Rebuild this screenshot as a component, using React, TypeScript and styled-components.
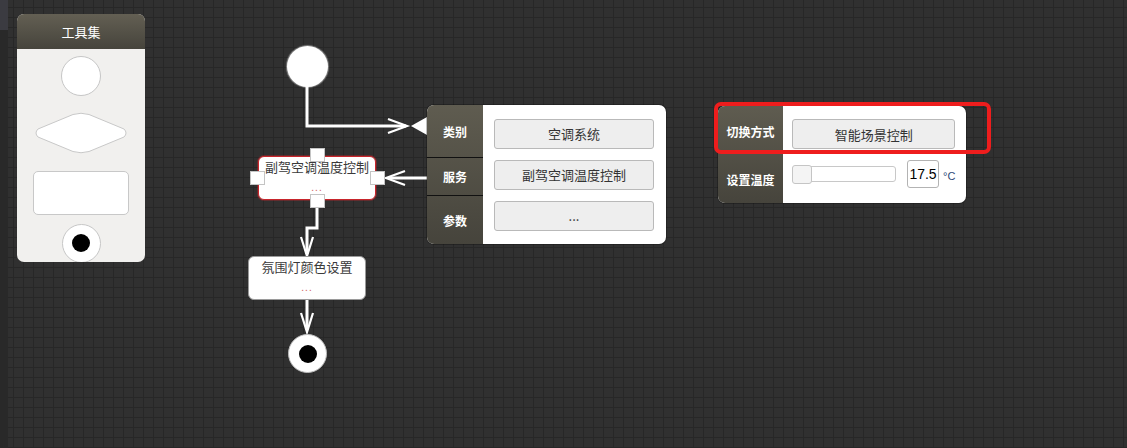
import React from "react";
import styled, { createGlobalStyle, css } from "styled-components";

const Global = createGlobalStyle`
  html, body { margin: 0; padding: 0; background: #303030; }
  body { font-family: "Noto Sans CJK SC", "Noto Sans", sans-serif; }
  * { box-sizing: border-box; }
`;

const Page = styled.div`
  display: flex;
  width: 1127px;
  height: 448px;
  overflow: hidden;
`;

const SideStrip = styled.div`
  width: 8px;
  flex: none;
  background: #292929;
  display: flex;
  flex-direction: column;
`;

const SideTab = styled.div`
  height: 30px;
  background: #3b3b41;
`;

const Canvas = styled.div`
  position: relative;
  flex: 1;
  background-color: #303030;
  background-image: linear-gradient(#272727 1px, transparent 1px),
    linear-gradient(90deg, #272727 1px, transparent 1px);
  background-size: 10px 10px;
  background-position: -5px 7px, 5px 0;
`;

const Layer = styled.svg`
  position: absolute;
  left: -8px;
  top: 0;
  width: 1127px;
  height: 448px;
  pointer-events: none;
`;

/* ---------- toolbox ---------- */
const Toolbox = styled.div`
  position: absolute;
  left: 9px;
  top: 14px;
  width: 128px;
  height: 248px;
  border-radius: 7px;
  overflow: hidden;
  background: #f1f0ee;
  display: flex;
  flex-direction: column;
`;

const ToolboxHead = styled.div`
  height: 35px;
  flex: none;
  background: linear-gradient(#635f53, #46443c);
  color: #fff;
  font-size: 13px;
  display: flex;
  align-items: center;
  justify-content: center;
`;

const ToolList = styled.div`
  display: flex;
  flex-direction: column;
  align-items: center;
  padding-top: 6px;
`;

const ToolSlot = styled.div<{ $h: number }>`
  height: ${(p) => p.$h}px;
  display: flex;
  align-items: center;
  justify-content: center;
`;

const ToolCircle = styled.div`
  width: 40px;
  height: 40px;
  border-radius: 50%;
  background: #fff;
  border: 1px solid #c6c6c6;
`;

const ToolRect = styled.div`
  width: 96px;
  height: 44px;
  border-radius: 5px;
  background: #fff;
  border: 1px solid #c8c8c8;
`;

const ToolEnd = styled.div`
  width: 39px;
  height: 39px;
  border-radius: 50%;
  background: #fff;
  border: 1px solid #c6c6c6;
  display: flex;
  align-items: center;
  justify-content: center;
  &::after {
    content: "";
    width: 18px;
    height: 18px;
    border-radius: 50%;
    background: #000;
  }
`;

/* ---------- flow nodes ---------- */
const Placed = styled.div<{ $x: number; $y: number }>`
  position: absolute;
  left: ${(p) => p.$x - 8}px;
  top: ${(p) => p.$y}px;
`;

const StartDot = styled.div`
  width: 41px;
  height: 41px;
  border-radius: 50%;
  background: #fff;
  box-shadow: 0 0 1px 1px rgba(255, 255, 255, 0.4);
`;

const EndDot = styled.div`
  width: 39px;
  height: 39px;
  border-radius: 50%;
  background: #fff;
  border: 1px solid #bdbdbd;
  display: flex;
  align-items: center;
  justify-content: center;
  &::after {
    content: "";
    width: 18px;
    height: 18px;
    border-radius: 50%;
    background: #000;
  }
`;

const ActionNode = styled.div<{ $active?: boolean }>`
  width: 118px;
  height: 44px;
  border-radius: 6px;
  background: #fff;
  border: 1px solid ${(p) => (p.$active ? "#c8252b" : "#9a9a9a")};
  ${(p) => p.$active && css`box-shadow: 0 0 0 1px rgba(200, 37, 43, 0.35);`}
  display: flex;
  flex-direction: column;
  align-items: center;
  padding-top: 1px;
  color: #3a3a3a;
  font-size: 13px;
  line-height: 18px;
`;

const NodeMore = styled.div`
  color: #d46a6a;
  font-size: 10px;
  line-height: 10px;
  margin-top: 6px;
  letter-spacing: 1px;
`;

const Port = styled.div<{ $x: number; $y: number }>`
  position: absolute;
  left: ${(p) => p.$x}px;
  top: ${(p) => p.$y}px;
  width: 15px;
  height: 14px;
  background: #fff;
  border: 1px solid #c4c4c4;
`;

/* ---------- property panels ---------- */
const Panel = styled.div<{ $x: number; $y: number; $w: number; $label: number }>`
  position: absolute;
  left: ${(p) => p.$x - 8}px;
  top: ${(p) => p.$y}px;
  width: ${(p) => p.$w}px;
  border-radius: 7px;
  overflow: hidden;
  background: #fff;
  display: grid;
  grid-template-columns: ${(p) => p.$label}px 1fr;
  box-shadow: 0 0 0 1px rgba(0, 0, 0, 0.25);
`;

const LabelCol = styled.div`
  background: linear-gradient(#5f5c50, #46443c);
  display: flex;
  flex-direction: column;
`;

const Label = styled.div<{ $h: number; $divider?: boolean }>`
  height: ${(p) => p.$h}px;
  display: flex;
  align-items: center;
  justify-content: center;
  color: #fff;
  font-weight: 700;
  font-size: 12px;
  ${(p) => p.$divider && css`border-top: 1px solid #111;`}
`;

const FieldCol = styled.div<{ $pl: number; $pr: number }>`
  display: flex;
  flex-direction: column;
  padding: 0 ${(p) => p.$pr}px 0 ${(p) => p.$pl}px;
`;

const FieldRow = styled.div<{ $h: number }>`
  height: ${(p) => p.$h}px;
  display: flex;
  align-items: center;
`;

const FieldButton = styled.div`
  flex: 1;
  height: 30px;
  border-radius: 3px;
  background: #eeeeee;
  border: 1px solid #b9b9b9;
  display: flex;
  align-items: center;
  justify-content: center;
  color: #333;
  font-size: 13px;
`;

const Slider = styled.div`
  position: relative;
  width: 104px;
  height: 16px;
  border: 1px solid #c8c8c8;
  border-radius: 3px;
  background: #fff;
`;

const SliderThumb = styled.div`
  position: absolute;
  left: -1px;
  top: -2px;
  width: 20px;
  height: 19px;
  border: 1px solid #c5c5c5;
  border-radius: 3px;
  background: #f4f4f4;
`;

const NumBox = styled.div`
  margin-left: 11px;
  width: 32px;
  height: 28px;
  border: 1px solid #b3b3b3;
  border-radius: 3px;
  display: flex;
  align-items: center;
  justify-content: center;
  font-family: "Liberation Sans", Arial, sans-serif;
  font-size: 14px;
  color: #000;
`;

const Unit = styled.span`
  margin-left: 4px;
  margin-top: 3px;
  font-family: "Liberation Sans", Arial, sans-serif;
  font-size: 11px;
  color: #2f4a78;
`;

const Highlight = styled.div`
  position: absolute;
  left: ${714 - 8}px;
  top: 102px;
  width: 277px;
  height: 52px;
  border: 4px solid #ee1d1d;
  border-radius: 7px;
`;

const W = "#ffffff";

export default function App() {
  return (
    <Page>
      <Global />
      <SideStrip>
        <SideTab />
      </SideStrip>
      <Canvas>
        <Layer viewBox="0 0 1127 448">
          <g fill="none" stroke={W} strokeWidth={3}>
            <polyline points="307,86 307,126 406,126" />
            <polyline points="388,119 407,126 388,133" strokeWidth={2.2} />
            <line x1={427} y1={178} x2={388} y2={178} />
            <polyline points="405,171 386,178 405,185" strokeWidth={2.2} />
            <polyline points="317,208 317,228 307,228 307,254" />
            <polyline points="301,237 307,256 313,237" strokeWidth={2.2} />
            <line x1={307} y1={299} x2={307} y2={330} />
            <polyline points="301,313 307,332 313,313" strokeWidth={2.2} />
          </g>
          <polygon points="411,126 427,117 427,135" fill={W} />
        </Layer>

        <Toolbox>
          <ToolboxHead>工具集</ToolboxHead>
          <ToolList>
            <ToolSlot $h={41}>
              <ToolCircle />
            </ToolSlot>
            <ToolSlot $h={74}>
              <svg width="96" height="42" viewBox="0 0 96 42">
                <path
                  d="M40 2.5 Q48 0 56 2.5 L91 17 Q95 21 91 25 L56 39.5 Q48 42 40 39.5 L5 25 Q1 21 5 17 Z"
                  fill="#fff"
                  stroke="#c8c8c8"
                  strokeWidth="1"
                />
              </svg>
            </ToolSlot>
            <ToolSlot $h={46}>
              <ToolRect />
            </ToolSlot>
            <ToolSlot $h={54}>
              <ToolEnd />
            </ToolSlot>
          </ToolList>
        </Toolbox>

        <Placed $x={287} $y={46}>
          <StartDot />
        </Placed>

        <Placed $x={258} $y={156}>
          <ActionNode $active>
            副驾空调温度控制
            <NodeMore>...</NodeMore>
          </ActionNode>
          <Port $x={52} $y={-8} />
          <Port $x={-8} $y={15} />
          <Port $x={112} $y={15} />
          <Port $x={52} $y={38} />
        </Placed>

        <Placed $x={248} $y={256}>
          <ActionNode>
            氛围灯颜色设置
            <NodeMore>...</NodeMore>
          </ActionNode>
        </Placed>

        <Placed $x={288} $y={334}>
          <EndDot />
        </Placed>

        <Panel $x={427} $y={105} $w={239} $label={56}>
          <LabelCol>
            <Label $h={52}>类别</Label>
            <Label $h={38} $divider>服务</Label>
            <Label $h={49} $divider>参数</Label>
          </LabelCol>
          <FieldCol $pl={11} $pr={12}>
            <FieldRow $h={57}>
              <FieldButton>空调系统</FieldButton>
            </FieldRow>
            <FieldRow $h={25}>
              <FieldButton>副驾空调温度控制</FieldButton>
            </FieldRow>
            <FieldRow $h={57}>
              <FieldButton>...</FieldButton>
            </FieldRow>
          </FieldCol>
        </Panel>

        <Panel $x={718} $y={106} $w={248} $label={65}>
          <LabelCol>
            <Label $h={50}>切换方式</Label>
            <Label $h={47}>设置温度</Label>
          </LabelCol>
          <FieldCol $pl={9} $pr={12}>
            <FieldRow $h={56}>
              <FieldButton>智能场景控制</FieldButton>
            </FieldRow>
            <FieldRow $h={24}>
              <Slider>
                <SliderThumb />
              </Slider>
              <NumBox>17.5</NumBox>
              <Unit>°C</Unit>
            </FieldRow>
          </FieldCol>
        </Panel>

        <Highlight />
      </Canvas>
    </Page>
  );
}
